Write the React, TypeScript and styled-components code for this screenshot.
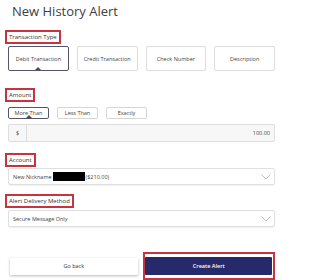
import styled, { createGlobalStyle, css } from 'styled-components';

const GlobalStyle = createGlobalStyle`
  body {
    margin: 0;
    background: #ffffff;
    font-family: 'Open Sans', 'Liberation Sans', sans-serif;
    color: #333333;
  }
`;

const TYPES = ['Debit Transaction', 'Credit Transaction', 'Check Number', 'Description'];
const COMPARES = ['More Than', 'Less Than', 'Exactly'];

export default function App() {
  return (
    <Page>
      <GlobalStyle />
      <Title>New History Alert</Title>

      <Label $top={11}>Transaction Type</Label>
      <Tiles>
        {TYPES.map((t, i) => (
          <Tile key={t} $active={i === 0}>
            {t}
          </Tile>
        ))}
      </Tiles>

      <Label $top={17} $gap={5}>Amount</Label>
      <Pills>
        {COMPARES.map((c, i) => (
          <Pill key={c} $active={i === 0}>
            {c}
          </Pill>
        ))}
      </Pills>
      <AmountInput>
        <Prefix>$</Prefix>
        <Value>100.00</Value>
      </AmountInput>

      <Label $top={11} $gap={1}>Account</Label>
      <Select>
        <SelectText>
          New Nickname<Redacted />($210.00)
        </SelectText>
        <Chevron />
      </Select>

      <Label $top={9}>Alert Delivery Method</Label>
      <Select>
        <SelectText>Secure Message Only</SelectText>
        <Chevron />
      </Select>

      <Actions>
        <BackButton>Go back</BackButton>
        <Highlight>
          <CreateButton>Create Alert</CreateButton>
        </Highlight>
      </Actions>
    </Page>
  );
}

function Chevron() {
  return (
    <ChevronSvg viewBox="0 0 10 6" width="10" height="6">
      <path d="M0.5 0.5 L5 5 L9.5 0.5" fill="none" stroke="#b5b5b5" strokeWidth="0.9" />
    </ChevronSvg>
  );
}

const Page = styled.div`
  width: 288px;
  height: 280px;
  box-sizing: border-box;
  padding: 4px 13px 0 8px;
  display: flex;
  flex-direction: column;
  align-items: stretch;
  overflow: hidden;
`;

const Title = styled.h1`
  margin: 0 0 0 4px;
  font-size: 13px;
  font-weight: 400;
  line-height: 15px;
  color: #404040;
`;

const Label = styled.div<{ $top: number; $gap?: number }>`
  align-self: flex-start;
  margin: ${(p) => p.$top}px 0 ${(p) => p.$gap ?? 2}px -3px;
  padding: 1px 2px;
  border: 2px solid #c7343f;
  font-size: 6px;
  line-height: 8px;
  color: #333333;
  white-space: nowrap;
`;

const caret = css`
  &::after {
    content: '';
    position: absolute;
    left: 50%;
    bottom: 0;
    transform: translateX(-50%);
    border-left: 3px solid transparent;
    border-right: 3px solid transparent;
    border-bottom: 3px solid #4a4a5c;
  }
`;

const Tiles = styled.div`
  display: grid;
  grid-template-columns: repeat(4, 1fr);
  gap: 8px;
`;

const Tile = styled.div<{ $active?: boolean }>`
  position: relative;
  height: 25px;
  box-sizing: border-box;
  display: flex;
  align-items: center;
  justify-content: center;
  border: 1px solid ${(p) => (p.$active ? '#56566a' : '#dddddd')};
  border-radius: 2px;
  font-size: 5.5px;
  color: #444444;
  white-space: nowrap;
  ${(p) => p.$active && caret}
`;

const Pills = styled.div`
  display: flex;
  gap: 8px;
`;

const Pill = styled.div<{ $active?: boolean }>`
  position: relative;
  width: 41px;
  height: 12px;
  box-sizing: border-box;
  display: flex;
  align-items: center;
  justify-content: center;
  border: 1px solid ${(p) => (p.$active ? '#56566a' : '#d6d6d6')};
  border-radius: 2px;
  font-size: 5.5px;
  color: #444444;
  white-space: nowrap;
  ${(p) => p.$active && caret}
`;

const AmountInput = styled.div`
  margin-top: 5px;
  height: 18px;
  box-sizing: border-box;
  display: flex;
  border: 1px solid #dddddd;
  border-radius: 2px;
  background: #f7f7f7;
  font-size: 5.5px;
  color: #444444;
`;

const Prefix = styled.div`
  width: 17px;
  display: flex;
  align-items: center;
  justify-content: center;
  border-right: 1px solid #dddddd;
`;

const Value = styled.div`
  flex: 1;
  display: flex;
  align-items: center;
  justify-content: flex-end;
  padding-right: 4px;
`;

const Select = styled.div`
  height: 17px;
  box-sizing: border-box;
  display: flex;
  align-items: center;
  justify-content: space-between;
  padding: 0 3px 0 4px;
  border: 1px solid #e0e0e0;
  border-radius: 2px;
  box-shadow: 0 1px 1px rgba(0, 0, 0, 0.06);
  font-size: 5.5px;
  color: #444444;
`;

const SelectText = styled.span`
  display: flex;
  align-items: center;
  white-space: nowrap;
`;

const Redacted = styled.span`
  display: inline-block;
  width: 32px;
  height: 9px;
  background: #000000;
  margin: 0 1px 0 1px;
`;

const ChevronSvg = styled.svg`
  display: block;
`;

const Actions = styled.div`
  margin-top: 25px;
  display: flex;
  align-items: center;
  gap: 5px;
  padding-left: 2px;
`;

const BackButton = styled.div`
  width: 128px;
  height: 17px;
  display: flex;
  align-items: center;
  justify-content: center;
  background: #ffffff;
  box-shadow: 0 1px 3px rgba(0, 0, 0, 0.28);
  border-radius: 1px;
  font-size: 5.5px;
  color: #333333;
`;

const Highlight = styled.div`
  width: 133px;
  height: 28px;
  box-sizing: border-box;
  border: 2px solid #c7343f;
  display: flex;
  align-items: center;
  justify-content: center;
`;

const CreateButton = styled.div`
  width: 127px;
  height: 18px;
  display: flex;
  align-items: center;
  justify-content: center;
  background: #262a6a;
  border-radius: 1px;
  font-size: 5.5px;
  font-weight: 600;
  color: #ffffff;
`;
